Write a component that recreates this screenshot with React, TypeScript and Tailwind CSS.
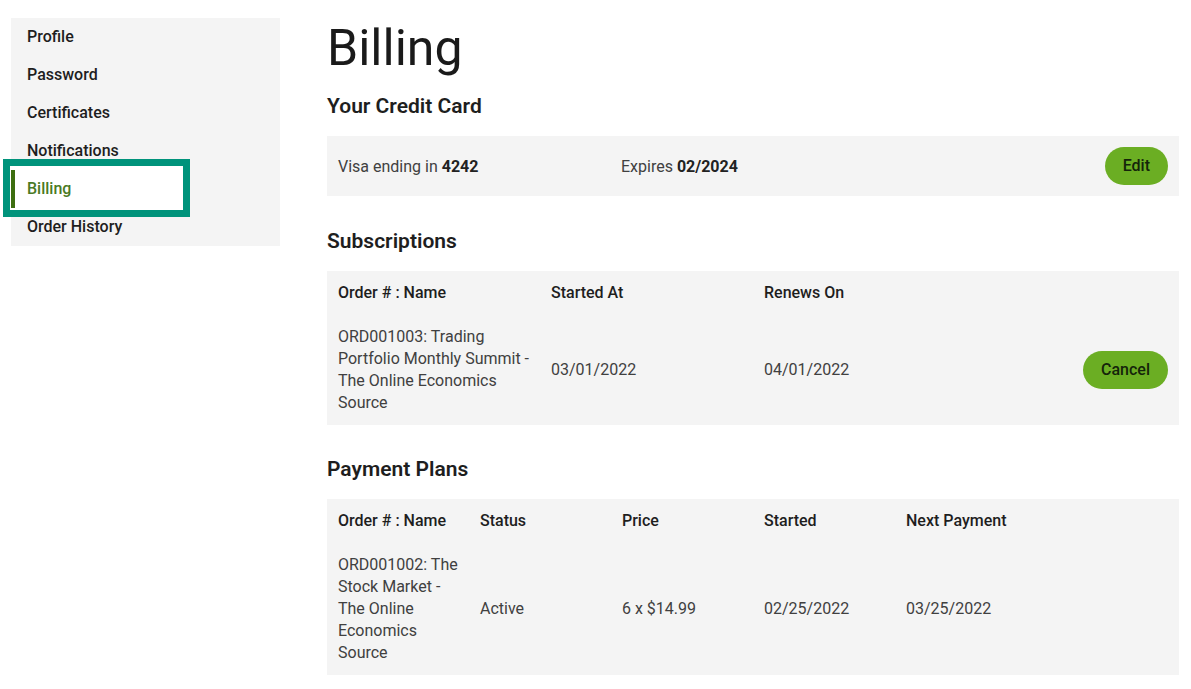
import React from "react";

const navItems = ["Profile", "Password", "Certificates", "Notifications", "Billing", "Order History"];

function Sidebar() {
  return (
    <div className="w-[269px] bg-[#f4f4f4] shrink-0 self-start">
      {navItems.map((item) =>
        item === "Billing" ? (
          <div key={item} className="relative h-[38px] flex items-center pl-4">
            <div className="absolute left-[-8px] top-[-11px] w-[187px] h-[58px] border-[7px] border-[#00937b] bg-white" />
            <div className="absolute left-0 top-0 w-[4px] h-[38px] bg-[#3d6e10]" />
            <span className="relative text-[16px] font-medium text-[#4a7a24]">{item}</span>
          </div>
        ) : (
          <div key={item} className="h-[38px] flex items-center pl-4 text-[16px] font-medium text-[#1e1e1e]">
            {item}
          </div>
        )
      )}
    </div>
  );
}

function SectionTitle({ children }: { children: React.ReactNode }) {
  return <h2 className="text-[21px] leading-[30px] font-semibold text-[#1e1e1e] mb-[15px]">{children}</h2>;
}

function PillButton({ children }: { children: React.ReactNode }) {
  return (
    <button className="h-[38px] px-[18px] rounded-full bg-[#6bae23] text-[#14240a] text-[16px] font-medium">
      {children}
    </button>
  );
}

export default function App() {
  return (
    <div
      className="min-h-[689px] bg-white flex pt-[18px] pl-[11px] pr-[12px] text-[#404040]"
      style={{ fontFamily: "Roboto, 'Noto Sans', sans-serif" }}
    >
      <Sidebar />
      <main className="ml-[47px] flex-1">
        <h1 className="text-[50px] leading-[60px] font-normal text-[#1a1a1a]">Billing</h1>
        <div className="mt-[13px]">
          <SectionTitle>Your Credit Card</SectionTitle>
          <div className="bg-[#f4f4f4] flex items-center px-[11px] py-[11px] text-[16px]">
            <div className="w-[283px] pt-[1px]">
              Visa ending in <b className="font-bold text-[#222]">4242</b>
            </div>
            <div className="flex-1 pt-[1px]">
              Expires <b className="font-bold text-[#222]">02/2024</b>
            </div>
            <PillButton>Edit</PillButton>
          </div>
        </div>

        <div className="mt-[30px]">
          <SectionTitle>Subscriptions</SectionTitle>
          <table className="w-full table-fixed bg-[#f4f4f4] text-[16px] leading-[22px] border-collapse">
            <thead>
              <tr className="text-left text-[#1e1e1e]">
                <th className="font-medium px-[11px] pt-[11px] pb-[11px] align-top">Order # : Name</th>
                <th className="font-medium px-[11px] pt-[11px] pb-[11px] align-top">Started At</th>
                <th className="font-medium px-[11px] pt-[11px] pb-[11px] align-top">Renews On</th>
                <th className="px-[11px]"></th>
              </tr>
            </thead>
            <tbody>
              <tr>
                <td className="pl-[11px] pr-[4px] pt-[11px] pb-[11px] align-middle">
                  ORD001003: Trading Portfolio Monthly Summit - The Online Economics Source
                </td>
                <td className="px-[11px] align-middle">03/01/2022</td>
                <td className="px-[11px] align-middle">04/01/2022</td>
                <td className="px-[11px] align-middle text-right">
                  <PillButton>Cancel</PillButton>
                </td>
              </tr>
            </tbody>
          </table>
        </div>

        <div className="mt-[29px]">
          <SectionTitle>Payment Plans</SectionTitle>
          <table className="w-full table-fixed bg-[#f4f4f4] text-[16px] leading-[22px] border-collapse">
            <thead>
              <tr className="text-left text-[#1e1e1e]">
                {["Order # : Name", "Status", "Price", "Started", "Next Payment", ""].map((h, i) => (
                  <th key={i} className="font-medium px-[11px] pt-[11px] pb-[11px] align-top">
                    {h}
                  </th>
                ))}
              </tr>
            </thead>
            <tbody>
              <tr>
                <td className="px-[11px] pt-[11px] pb-[11px] align-middle">
                  ORD001002: The Stock Market - The Online Economics Source
                </td>
                <td className="px-[11px] align-middle">Active</td>
                <td className="px-[11px] align-middle">6 x $14.99</td>
                <td className="px-[11px] align-middle">02/25/2022</td>
                <td className="px-[11px] align-middle">03/25/2022</td>
                <td className="px-[11px]"></td>
              </tr>
            </tbody>
          </table>
        </div>
      </main>
    </div>
  );
}
